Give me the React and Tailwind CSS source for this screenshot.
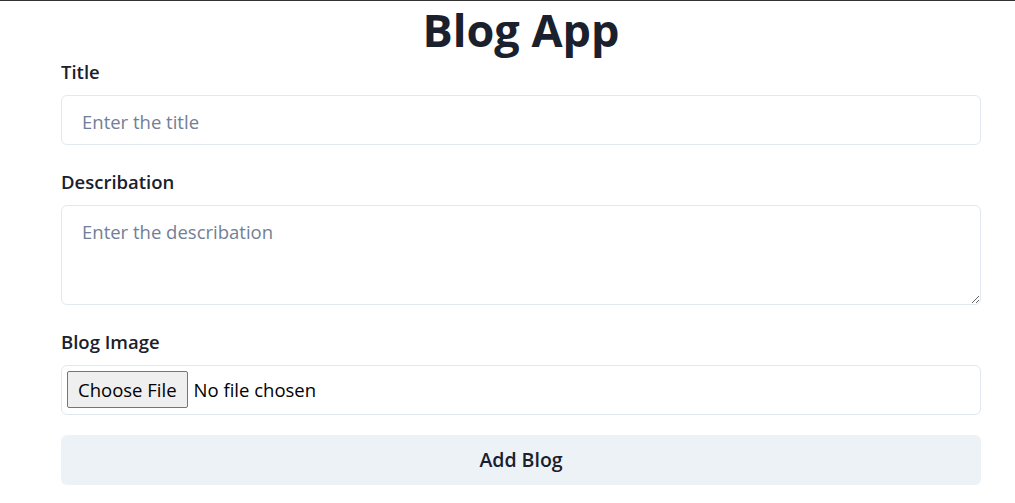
import React from "react";

export default function App() {
  return (
    <div className="min-h-screen bg-white border-t border-[#333333] font-['Open_Sans',sans-serif] text-[#1a202c]">
      <form className="ml-[61px] w-[920px] flex flex-col" onSubmit={(e) => e.preventDefault()}>
        <h1 className="text-center text-[45px] leading-[57px] font-bold">Blog App</h1>
        <label className="text-[18.5px] leading-[27px] font-semibold mb-[10px]">Title</label>
        <input
          type="text"
          placeholder="Enter the title"
          className="h-[50px] w-full border border-[#e2e8f0] rounded-md px-[20px] pt-[3px] text-[18.5px] outline-none placeholder:text-[#718096]"
        />
        <label className="mt-[23px] text-[18.5px] leading-[27px] font-semibold mb-[10px]">Describation</label>
        <textarea
          placeholder="Enter the describation"
          className="h-[100px] w-full border border-[#e2e8f0] rounded-md px-[20px] pt-[12px] text-[18.5px] leading-[27px] outline-none placeholder:text-[#718096]"
        />
        <label className="mt-[23px] text-[18.5px] leading-[27px] font-semibold mb-[10px]">Blog Image</label>
        <input
          type="file"
          className="h-[50px] w-full border border-[#e2e8f0] rounded-md px-[5px] py-[5px] text-[18.5px] text-black file:bg-[#efefef] file:border file:border-[#767676] file:rounded-[2px] file:px-[10px] file:h-[37px] file:mr-[6px] file:text-black"
        />
        <button
          type="submit"
          className="mt-[20px] h-[50px] w-full bg-[#edf2f7] rounded-md text-[19.5px] font-semibold"
        >
          Add Blog
        </button>
      </form>
    </div>
  );
}
